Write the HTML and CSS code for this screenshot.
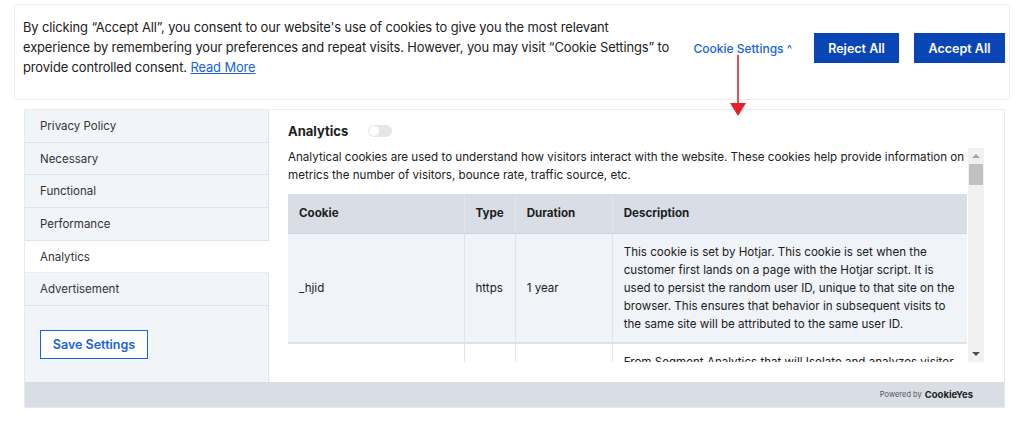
FILE: index.html
```html
<!DOCTYPE html>
<html lang="en">
<head>
<meta charset="utf-8">
<title>Cookie consent</title>
<link rel="stylesheet" href="styles.css">
</head>
<body>
<div class="banner">
  <p class="banner-text">By clicking “Accept All”, you consent to our website's use of cookies to give you the most relevant experience by remembering your preferences and repeat visits. However, you may visit “Cookie Settings” to provide controlled consent. <a class="read-more" href="#">Read More</a></p>
  <div class="banner-actions">
    <a class="settings-link" href="#">Cookie Settings <span class="caret">^</span></a>
    <button class="btn btn-solid reject">Reject All</button>
    <button class="btn btn-solid accept">Accept All</button>
  </div>
</div>

<div class="panel">
  <div class="panel-body">
    <aside class="sidebar">
      <ul class="tabs">
        <li class="tab">Privacy Policy</li>
        <li class="tab">Necessary</li>
        <li class="tab">Functional</li>
        <li class="tab">Performance</li>
        <li class="tab active">Analytics</li>
        <li class="tab">Advertisement</li>
      </ul>
      <div class="save-wrap"><button class="btn-outline">Save Settings</button></div>
    </aside>
    <section class="content">
      <div class="content-head">
        <h3 class="content-title">Analytics</h3>
        <span class="toggle"><span class="knob"></span></span>
      </div>
      <div class="scroll">
        <div class="scroll-inner">
          <p class="desc">Analytical cookies are used to understand how visitors interact with the website. These cookies help provide information on metrics the number of visitors, bounce rate, traffic source, etc.</p>
          <table class="ctable">
            <thead>
              <tr><th class="c1">Cookie</th><th class="c2">Type</th><th class="c3">Duration</th><th class="c4">Description</th></tr>
            </thead>
            <tbody>
              <tr class="alt"><td>_hjid</td><td>https</td><td>1 year</td><td>This cookie is set by Hotjar. This cookie is set when the customer first lands on a page with the Hotjar script. It is used to persist the random user ID, unique to that site on the browser. This ensures that behavior in subsequent visits to the same site will be attributed to the same user ID.</td></tr>
              <tr><td>ajs_user_id</td><td>https</td><td>never</td><td>From Segment Analytics that will Isolate and analyzes visitor traffic on the website and store the user ID.</td></tr>
            </tbody>
          </table>
        </div>
        <div class="scrollbar">
          <span class="sb-up"></span>
          <span class="sb-thumb"></span>
          <span class="sb-down"></span>
        </div>
      </div>
    </section>
  </div>
  <div class="panel-footer">
    <span class="powered">Powered by</span><span class="brand">CookieYes</span>
  </div>
</div>

<svg class="arrow" width="20" height="64" viewBox="0 0 20 64" aria-hidden="true">
  <line x1="10" y1="0" x2="10" y2="50" stroke="#e5222b" stroke-width="1.6"/>
  <polygon points="2,48 18,48 10,61" fill="#e5222b"/>
</svg>
</body>
</html>
```
FILE: styles.css
```css
* { box-sizing: border-box; }
html, body { margin: 0; padding: 0; background: #fff; }
body {
  font-family: "Inter", "DejaVu Sans", sans-serif;
  color: #212121;
  width: 1024px;
  height: 421px;
  overflow: hidden;
  position: relative;
}

.banner {
  margin: 4px 14px 0 14px;
  height: 96px;
  border: 1px solid #efefef;
  display: flex;
  align-items: center;
  justify-content: space-between;
  padding: 0 4px 8px 8px;
}
.banner-text {
  margin: 0;
  width: 648px;
  font-size: 12.9px;
  line-height: 20px;
  letter-spacing: -0.1px;
  color: #212121;
}
.read-more { color: #1863dc; text-decoration: underline; }
.banner-actions { display: flex; align-items: center; }
.settings-link {
  color: #1863dc;
  text-decoration: none;
  font-size: 12px;
  font-weight: 500;
  margin-right: 22px;
}
.caret { font-size: 11px; }
.btn {
  height: 30px;
  border: none;
  background: #0a45b5;
  color: #fff;
  font-family: inherit;
  font-size: 12.5px;
  font-weight: 600;
  padding: 0;
}
.reject { width: 85px; margin-right: 15px; }
.accept { width: 91px; }

.panel {
  margin: 9px 0 0 24px;
  width: 981px;
  height: 299px;
  border: 1px solid #e6e9ee;
  border-top-color: #ececec;
  display: flex;
  flex-direction: column;
}
.panel-body { display: flex; height: 273px; }
.sidebar {
  width: 245px;
  background: #f1f4f9;
  border-right: 1px solid #dfe3ea;
  display: flex;
  flex-direction: column;
}
.tabs { list-style: none; margin: 0; padding: 0; }
.tab {
  height: 32.7px;
  display: flex;
  align-items: center;
  padding-left: 15px;
  font-size: 11.5px;
  color: #333;
  border-bottom: 1px solid #dfe3ea;
}
.tab.active { background: #fff; margin-right: -1px; border-bottom-color: #e8ebf0; }
.save-wrap { padding: 24px 0 0 15px; }
.btn-outline {
  width: 108px;
  height: 29px;
  background: #fff;
  border: 1.5px solid #1863dc;
  color: #1863dc;
  font-family: inherit;
  font-size: 12.5px;
  font-weight: 600;
  padding: 0;
}

.content { flex: 1; padding: 12px 20px 0 19px; }
.content-head { display: flex; align-items: center; height: 17px; }
.content-title { margin: 0 20px 0 0; font-size: 13px; font-weight: 700; color: #212121; }
.toggle {
  width: 24px;
  height: 12px;
  border-radius: 6px;
  background: #e3e6ea;
  position: relative;
  display: inline-block;
}
.knob {
  position: absolute;
  left: 1px; top: 1px;
  width: 10px; height: 10px;
  border-radius: 50%;
  background: #fff;
}

.scroll {
  margin-top: 9px;
  height: 214px;
  display: flex;
  overflow: hidden;
}
.scroll-inner { width: 680px; overflow: hidden; }
.desc {
  margin: 0 0 10px 0;
  font-size: 11.6px;
  line-height: 18px;
  color: #212121;
  width: 680px;
}
.ctable {
  width: 679px;
  border-collapse: collapse;
  font-size: 11.6px;
  line-height: 18px;
  color: #212121;
}
.ctable th {
  background: #d9dee6;
  height: 39px;
  text-align: left;
  font-weight: 700;
  padding: 0 11px;
  border-right: 1px solid #e3e7ed;
  border-bottom: 1px solid #d0d6df;
}
.ctable td {
  padding: 9px 11px 9px;
  vertical-align: middle;
  border-right: 1px solid #e0e4ea;
  border-bottom: 2px solid #dde2ea;
}
.ctable th:last-child, .ctable td:last-child { border-right: none; }
.ctable tr.alt td { background: #f0f3f8; }
.c1 { width: 176px; }
.c2 { width: 50px; }
.c3 { width: 97px; }

.scrollbar {
  width: 16px;
  flex: none;
  background: #f1f1f1;
  position: relative;
}
.sb-up, .sb-down {
  position: absolute;
  left: 4px;
  width: 0; height: 0;
  border-left: 4px solid transparent;
  border-right: 4px solid transparent;
}
.sb-up { top: 6px; border-bottom: 4px solid #a3a3a3; }
.sb-down { bottom: 6px; border-top: 4px solid #505050; }
.sb-thumb {
  position: absolute;
  left: 1px; top: 16px;
  width: 14px; height: 21px;
  background: #c1c1c1;
}

.panel-footer {
  height: 25px;
  background: #d9dee6;
  display: flex;
  align-items: center;
  justify-content: flex-end;
  padding-right: 31px;
  gap: 3px;
}
.powered { font-size: 7.5px; color: #555; }
.brand { font-size: 9.5px; font-weight: 700; color: #222; }

.arrow {
  position: absolute;
  left: 728px;
  top: 55px;
}
```
